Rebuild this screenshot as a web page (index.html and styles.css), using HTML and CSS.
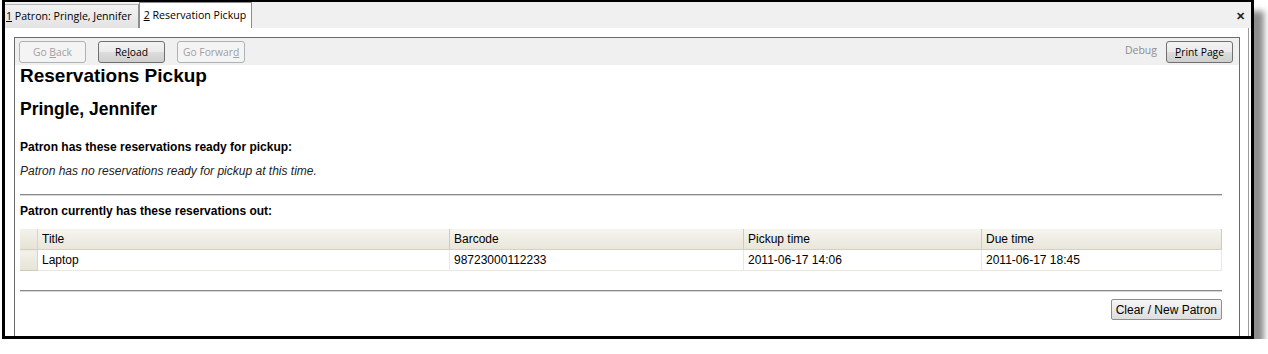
FILE: index.html
```html
<!DOCTYPE html>
<html lang="en">
<head>
    <meta charset="UTF-8">
    <title>Reservation Pickup</title>
    <link rel="stylesheet" href="styles.css">
</head>
<body>
    <div class="window">
        <div class="tabbar">
            <div class="tab"><u>1</u> Patron: Pringle, Jennifer</div>
            <div class="tab active"><u>2</u> Reservation Pickup</div>
            <span class="close">&#x2715;</span>
        </div>
        <div class="frame">
            <div class="panel">
                <div class="toolbar">
                    <div class="nav-buttons">
                        <button class="btn disabled">Go <u>B</u>ack</button>
                        <button class="btn">Re<u>l</u>oad</button>
                        <button class="btn disabled">Go Forwar<u>d</u></button>
                    </div>
                    <div class="tools">
                        <span class="debug">Debug</span>
                        <button class="btn print"><u>P</u>rint Page</button>
                    </div>
                </div>
                <div class="content">
                    <h1>Reservations Pickup</h1>
                    <h2>Pringle, Jennifer</h2>
                    <p class="section-title first">Patron has these reservations ready for pickup:</p>
                    <p class="empty">Patron has no reservations ready for pickup at this time.</p>
                    <div class="rule"></div>
                    <p class="section-title">Patron currently has these reservations out:</p>
                    <table class="grid">
                        <thead>
                            <tr>
                                <th class="rowhead"></th>
                                <th class="col-title">Title</th>
                                <th class="col-barcode">Barcode</th>
                                <th class="col-pickup">Pickup time</th>
                                <th class="col-due">Due time</th>
                            </tr>
                        </thead>
                        <tbody>
                            <tr>
                                <td class="rowhead"></td>
                                <td>Laptop</td>
                                <td>98723000112233</td>
                                <td>2011-06-17 14:06</td>
                                <td>2011-06-17 18:45</td>
                            </tr>
                        </tbody>
                    </table>
                    <div class="rule bottom"></div>
                    <div class="actions">
                        <button class="clear-button">Clear / New Patron</button>
                    </div>
                </div>
            </div>
        </div>
    </div>
</body>
</html>
```

FILE: styles.css
```css
body {
    margin: 0;
    background-color: #fff;
    font-family: "Liberation Sans", Arial, sans-serif;
}
.window {
    box-sizing: border-box;
    width: 1252px;
    height: 339px;
    margin-left: 2px;
    border: 3px solid #000;
    border-top-width: 2px;
    background-color: #fff;
    overflow: hidden;
    box-shadow: 10px 11px 6px rgba(0, 0, 0, 0.45);
}
.tabbar {
    display: flex;
    align-items: flex-end;
    height: 26px;
    background-color: #f0f0f0;
    font-family: "Open Sans", "Noto Sans", sans-serif;
    font-size: 10.6px;
    color: #000;
}
.tab {
    box-sizing: border-box;
    height: 24px;
    padding: 4px 6px 0 1px;
    background: linear-gradient(#f2f2f2, #e3e3e3);
    border-right: 1px solid #8e8f8f;
    border-top: 1px solid #b5b5b5;
    white-space: nowrap;
}
.tab.active {
    height: 26px;
    padding: 5px 5px 0 4px;
    background: #fff;
    border: 1px solid #898c95;
    border-bottom: none;
}
.close {
    margin-left: auto;
    align-self: center;
    margin-right: 6px;
    font-size: 11px;
    font-weight: bold;
    color: #222;
}
.frame {
    height: 320px;
    padding: 9px 0 0 9px;
    border-right: 1px solid #9a9a9a;
    margin-right: 2px;
    box-sizing: border-box;
}
.panel {
    width: 1226px;
    height: 320px;
    box-sizing: border-box;
    border: 1px solid #6a6a6a;
    border-bottom: none;
}
.toolbar {
    display: flex;
    justify-content: space-between;
    height: 27px;
    box-sizing: border-box;
    padding: 3px 6px 0 4px;
    background-color: #f0f0f0;
}
.nav-buttons {
    display: flex;
    gap: 12px;
}
.tools {
    display: flex;
    gap: 9px;
}
.btn {
    box-sizing: border-box;
    height: 22px;
    min-width: 67px;
    padding: 0 5px;
    border: 1px solid #707070;
    border-radius: 3px;
    background: linear-gradient(#f2f2f2 0%, #ebebeb 50%, #dddddd 51%, #cfcfcf 100%);
    font-family: "Open Sans", "Noto Sans", sans-serif;
    font-size: 10.3px;
    color: #000;
}
.btn.disabled {
    border-color: #adb2b5;
    background: #f4f4f4;
    color: #a0a0a0;
}
.debug {
    padding-top: 2px;
    font-family: "Open Sans", "Noto Sans", sans-serif;
    font-size: 10.5px;
    color: #8d8d8d;
}
.content {
    padding: 0 17px 0 5px;
    color: #000;
}
h1 {
    margin: 0;
    font-size: 19px;
    line-height: 22px;
}
h2 {
    margin: 11px 0 0;
    font-size: 17.5px;
    line-height: 22px;
}
.section-title {
    margin: 8px 0 0;
    font-size: 12px;
    font-weight: bold;
    line-height: 15px;
}
.section-title.first {
    margin-top: 20px;
}
.empty {
    margin: 9px 0 0;
    font-size: 12px;
    font-style: italic;
    line-height: 14px;
    color: #222;
}
.rule {
    margin-top: 16px;
    border-top: 1px solid #8a8a8a;
    border-bottom: 1px solid #d6d6d6;
}
.rule.bottom {
    margin-top: 19px;
}
.grid {
    width: 1202px;
    margin-top: 10px;
    border-collapse: collapse;
    table-layout: fixed;
    font-size: 12px;
}
.grid th,
.grid td {
    height: 20px;
    padding: 0 4px;
    text-align: left;
    font-weight: normal;
    white-space: nowrap;
}
.grid th {
    background: linear-gradient(#f5f4ee, #e9e6da);
    border-right: 1px solid #cfccbf;
    border-bottom: 1px solid #d4d0c2;
}
.grid td {
    border-right: 1px solid #ebe8dc;
    border-bottom: 1px solid #ebe8dc;
}
.grid .rowhead {
    width: 17px;
    padding: 0;
    background: linear-gradient(#f3f2ea, #e6e3d6);
    border-right: 1px solid #d8d5c8;
}
.grid td.rowhead {
    border-bottom: 1px solid #cfccbf;
}
.col-title {
    width: 403px;
}
.col-barcode {
    width: 285px;
}
.col-pickup {
    width: 229px;
}
.actions {
    display: flex;
    justify-content: flex-end;
    margin-top: 7px;
}
.clear-button {
    height: 21px;
    padding: 0 4px;
    border: 1px solid #8e8e8e;
    border-radius: 2px;
    background: linear-gradient(#f6f6f6, #dedede);
    font-family: "Liberation Sans", Arial, sans-serif;
    font-size: 12px;
    color: #000;
}
```
